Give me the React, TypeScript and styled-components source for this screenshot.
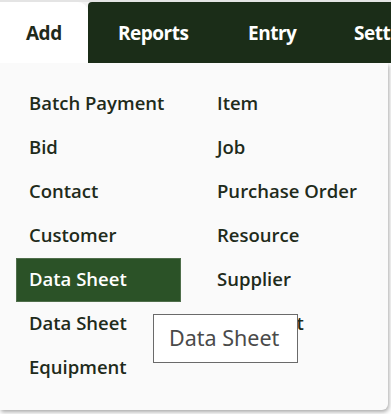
import React from "react";
import styled, { createGlobalStyle } from "styled-components";

const Global = createGlobalStyle`
  html, body { margin: 0; padding: 0; background: #ffffff; }
  body { font-family: "Open Sans", "Liberation Sans", sans-serif; }
`;

const Page = styled.div`
  width: 391px;
  height: 414px;
  position: relative;
  overflow: hidden;
  background: #ffffff;
`;

const Nav = styled.nav`
  display: flex;
  height: 61px;
  border-top: 2px solid #e4e4e4;
  background: #f4f4f4;
`;

const ActiveTab = styled.div`
  flex: 0 0 88px;
  background: #ffffff;
  border-top-right-radius: 10px;
  display: flex;
  align-items: center;
  padding-left: 26px;
  box-sizing: border-box;
  font-size: 19px;
  font-weight: 700;
  color: #1f2b1b;
  letter-spacing: -0.5px;
`;

const TabStrip = styled.div`
  flex: 1 1 auto;
  min-width: 0;
  overflow: hidden;
  display: flex;
  align-items: center;
  background: #1b2d18;
  border-top-left-radius: 4px;
  padding-left: 30px;
`;

const Tab = styled.div<{ $w: number }>`
  flex: 0 0 ${(p) => p.$w}px;
  font-size: 19px;
  font-weight: 700;
  color: #ffffff;
  white-space: nowrap;
  letter-spacing: -0.5px;
`;

const Panel = styled.div`
  width: 388px;
  height: 347px;
  background: #fafafa;
  box-shadow: 1px 2px 4px rgba(0, 0, 0, 0.35);
  border-bottom-right-radius: 6px;
  box-sizing: border-box;
  padding: 19px 0 0 16px;
  display: grid;
  grid-template-columns: 188px 1fr;
  grid-template-rows: repeat(7, 44px);
  grid-auto-flow: column;
`;

const Item = styled.div<{ $active?: boolean; $tight?: boolean }>`
  width: 165px;
  height: 44px;
  box-sizing: border-box;
  display: flex;
  align-items: center;
  padding-left: 12px;
  padding-bottom: 4px;
  font-size: 18.5px;
  font-weight: 600;
  white-space: nowrap;
  letter-spacing: ${(p) => (p.$tight ? "-0.8px" : "0")};
  color: ${(p) => (p.$active ? "#ffffff" : "#1f2b1b")};
  background: ${(p) => (p.$active ? "#2b5227" : "transparent")};
  border: 1px solid ${(p) => (p.$active ? "#4f6e4b" : "transparent")};
`;

const Tooltip = styled.div`
  position: absolute;
  left: 153px;
  top: 314px;
  width: 145px;
  height: 49px;
  box-sizing: border-box;
  background: #ffffff;
  border: 1px solid #6a6a6a;
  display: flex;
  align-items: center;
  padding-left: 15px;
  padding-bottom: 2px;
  font-family: "Noto Sans", "Open Sans", sans-serif;
  font-size: 21.5px;
  color: #4a4a4a;
`;

const left = ["Batch Payment", "Bid", "Contact", "Customer", "Data Sheet", "Data Sheet", "Equipment"];
const right = ["Item", "Job", "Purchase Order", "Resource", "Supplier", "Timesheet"];

export default function App() {
  return (
    <Page>
      <Global />
      <Nav>
        <ActiveTab>Add</ActiveTab>
        <TabStrip>
          <Tab $w={130}>Reports</Tab>
          <Tab $w={106}>Entry</Tab>
          <Tab $w={80}>Settings</Tab>
        </TabStrip>
      </Nav>
      <Panel>
        {left.map((t, i) => (
          <Item key={"l" + i} $active={i === 4}>{t}</Item>
        ))}
        {right.map((t, i) => (
          <Item key={"r" + i} $tight={i === 5}>{t}</Item>
        ))}
      </Panel>
      <Tooltip>Data Sheet</Tooltip>
    </Page>
  );
}
